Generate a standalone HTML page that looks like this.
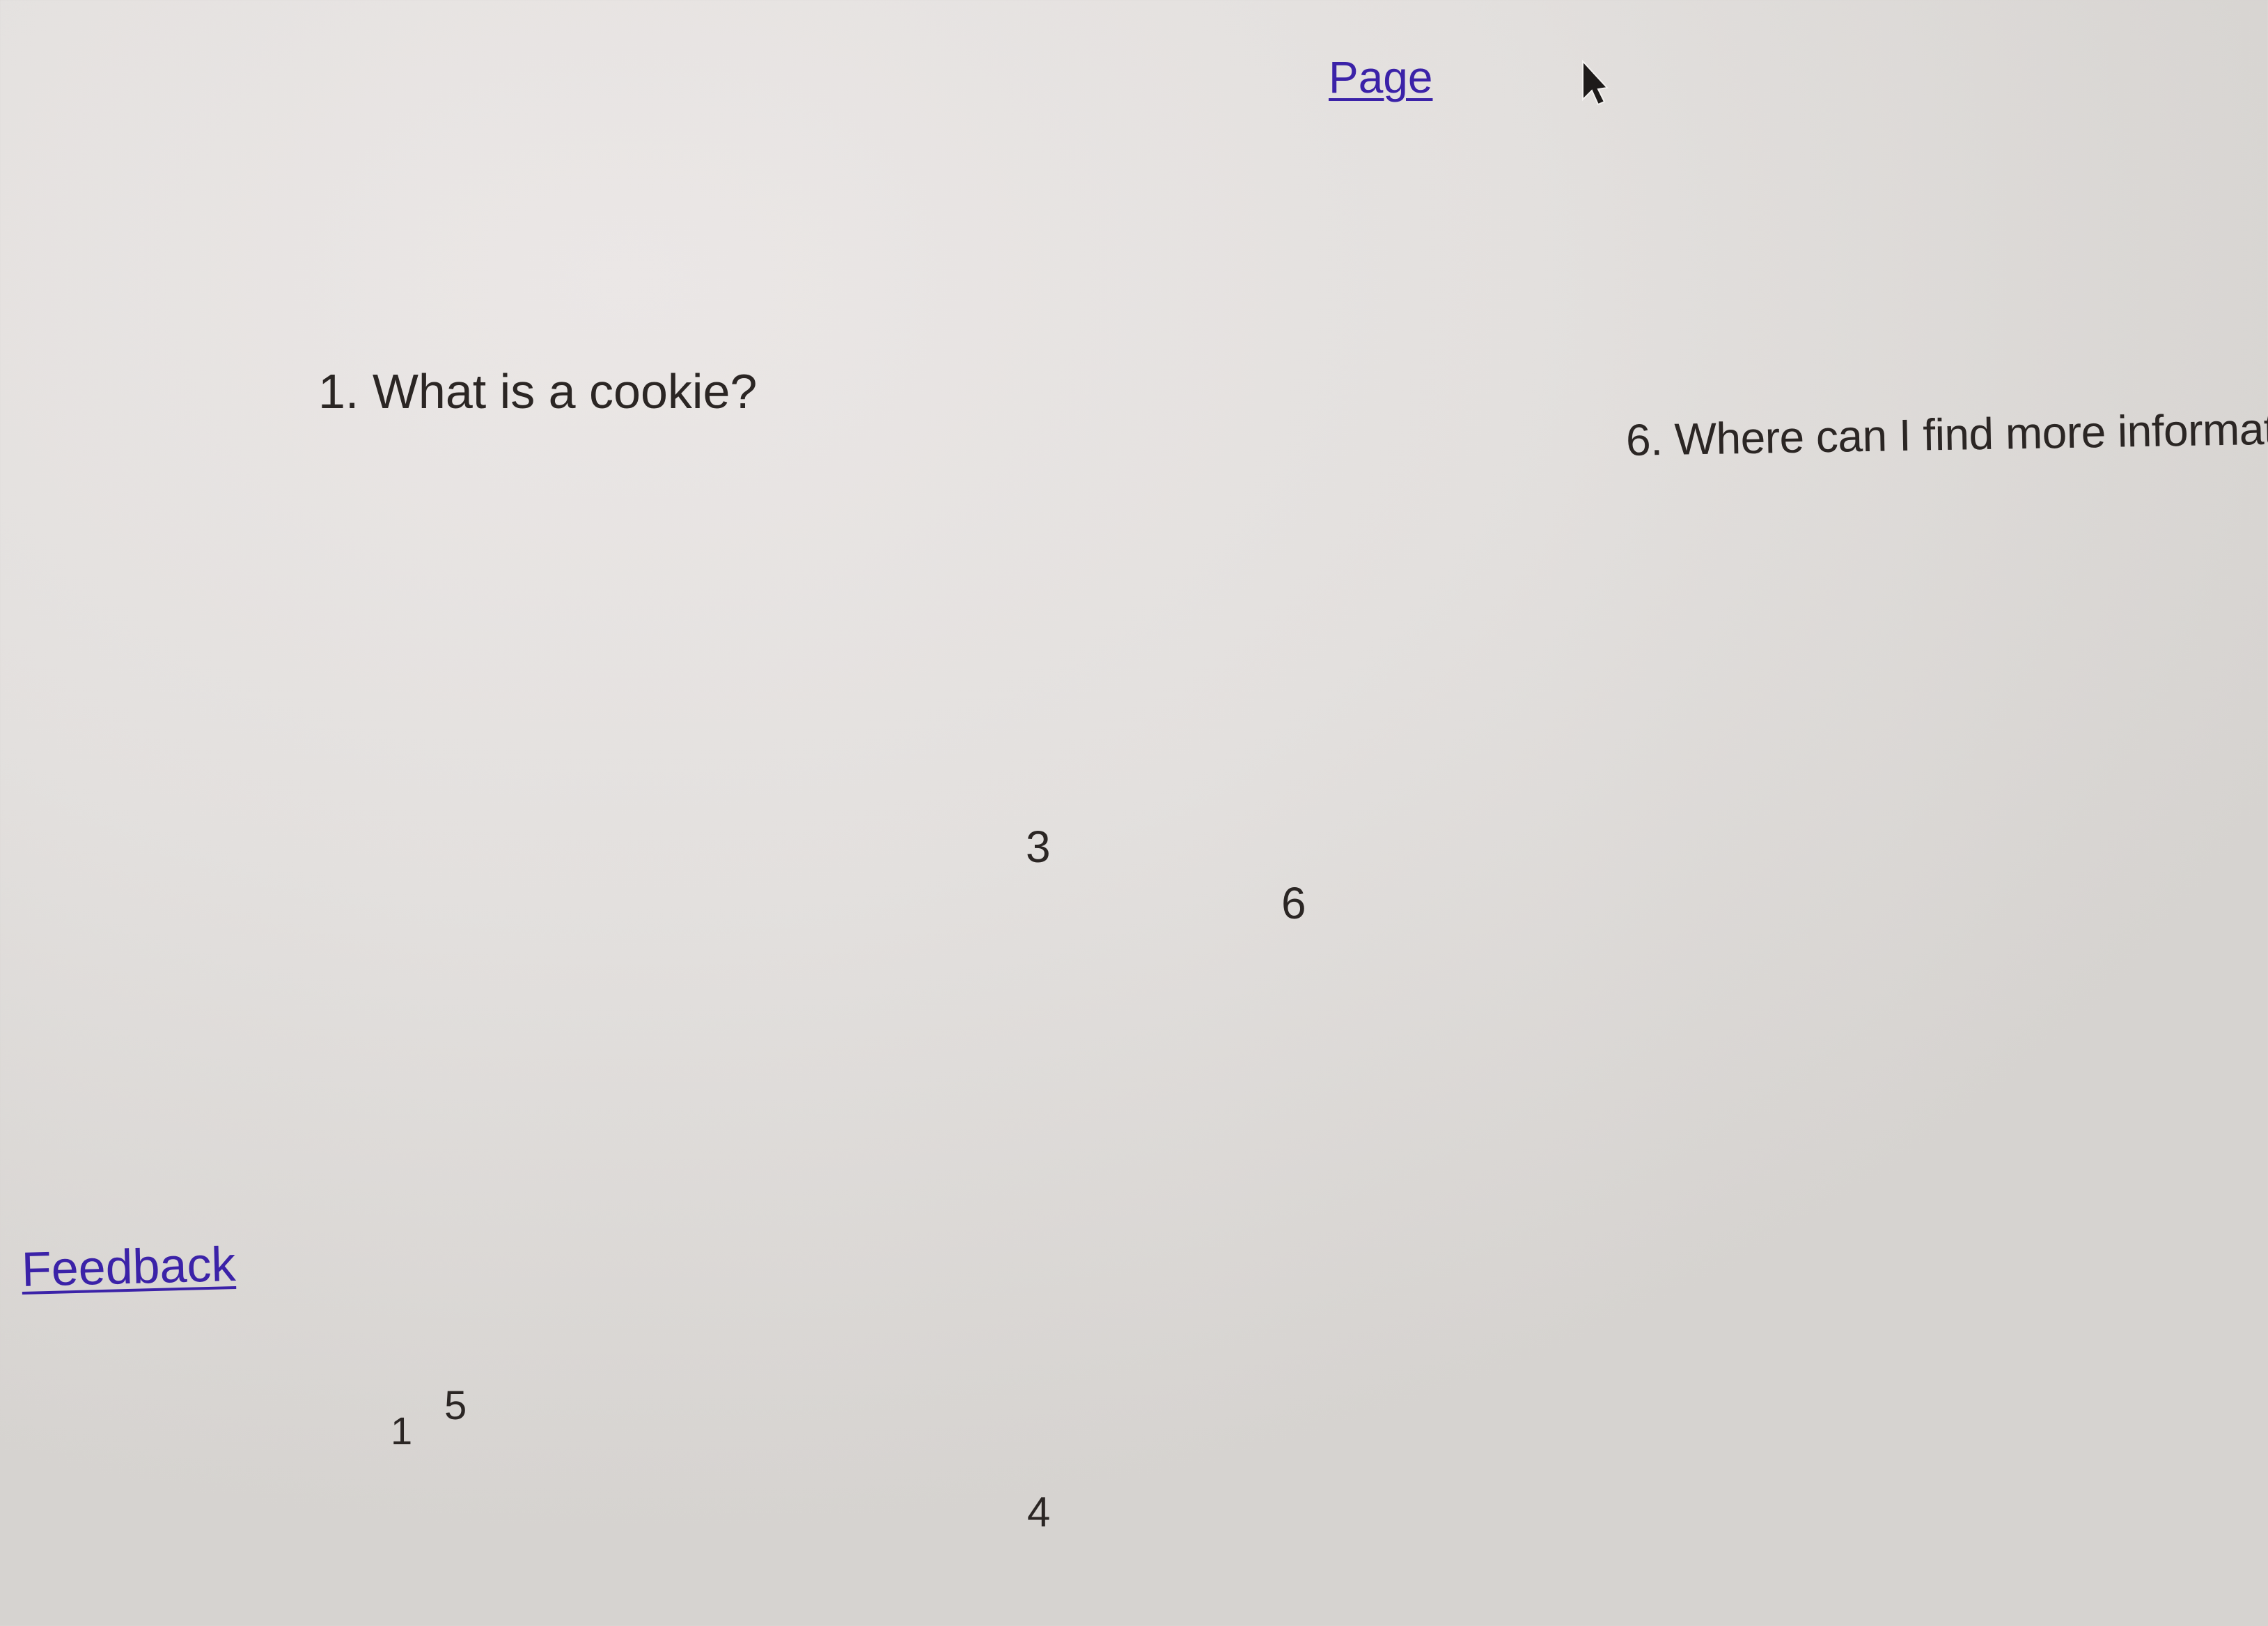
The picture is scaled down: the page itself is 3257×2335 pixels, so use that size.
<!DOCTYPE html>
<html><head><meta charset="utf-8"><style>
html,body{margin:0;padding:0}
body{width:3257px;height:2335px;overflow:hidden;position:relative;
background:radial-gradient(ellipse 2600px 1800px at 900px 400px,#ebe7e6 0%,#e3e0de 50%,#d6d3d0 100%);
font-family:"Liberation Sans",sans-serif;color:#2b2624}
.t{position:absolute;line-height:1;white-space:nowrap}
a{color:#3b22a8;text-decoration:underline;text-decoration-thickness:4px;text-underline-offset:8px}
</style></head><body>
<div class="t" style="left:1908px;top:79px;font-size:64px"><a href="#">Page</a></div>
<svg style="position:absolute;left:2262px;top:80px" width="60" height="80" viewBox="0 0 60 80">
<path d="M11 8 L11 63 L24 50 L33 70 L42 66 L33 48 L46 46 Z" fill="#1e1b1a" stroke="#f4f2f0" stroke-width="2"/>
</svg>
<div class="t" style="left:457px;top:527px;font-size:70px">1. What is a cookie?</div>
<div class="t" style="left:2335px;top:600px;font-size:64px;letter-spacing:-0.5px;transform:rotate(-1deg);transform-origin:left center">6. Where can I find more informati</div>
<div class="t" style="left:1473px;top:1184px;font-size:64px">3</div>
<div class="t" style="left:1840px;top:1265px;font-size:64px">6</div>
<div class="t" style="left:31px;top:1788px;font-size:70px;transform:rotate(-1.5deg);transform-origin:left center"><a href="#">Feedback</a></div>
<div class="t" style="left:561px;top:2027px;font-size:56px">1</div>
<div class="t" style="left:638px;top:1990px;font-size:58px">5</div>
<div class="t" style="left:1475px;top:2142px;font-size:60px">4</div>
</body></html>
